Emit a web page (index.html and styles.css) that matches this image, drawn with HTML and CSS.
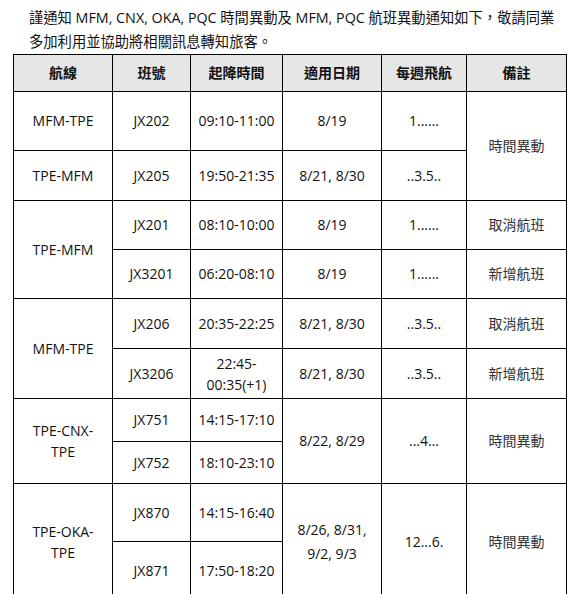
FILE: index.html
```html
<!DOCTYPE html>
<html lang="zh-Hant">
<head>
<meta charset="utf-8">
<link rel="stylesheet" href="styles.css">
</head>
<body>
<div class="page">
  <p class="notice">謹通知 MFM, CNX, OKA, PQC 時間異動及 MFM, PQC 航班異動通知如下，敬請同業多加利用並協助將相關訊息轉知旅客。</p>
  <table class="sched">
    <colgroup>
      <col class="c1"><col class="c2"><col class="c3"><col class="c4"><col class="c5"><col class="c6">
    </colgroup>
    <thead>
      <tr class="h-head">
        <th>航線</th><th>班號</th><th>起降時間</th><th>適用日期</th><th>每週飛航</th><th>備註</th>
      </tr>
    </thead>
    <tbody>
      <tr class="h59">
        <td>MFM-TPE</td><td>JX202</td><td>09:10-11:00</td><td>8/19</td><td>1......</td><td rowspan="2" class="cjk">時間異動</td>
      </tr>
      <tr class="h50">
        <td>TPE-MFM</td><td>JX205</td><td>19:50-21:35</td><td>8/21, 8/30</td><td>..3.5..</td>
      </tr>
      <tr class="h49">
        <td rowspan="2">TPE-MFM</td><td>JX201</td><td>08:10-10:00</td><td>8/19</td><td>1......</td><td class="cjk">取消航班</td>
      </tr>
      <tr class="h49">
        <td>JX3201</td><td>06:20-08:10</td><td>8/19</td><td>1......</td><td class="cjk">新增航班</td>
      </tr>
      <tr class="h50">
        <td rowspan="2">MFM-TPE</td><td>JX206</td><td>20:35-22:25</td><td>8/21, 8/30</td><td>..3.5..</td><td class="cjk">取消航班</td>
      </tr>
      <tr class="h50">
        <td>JX3206</td><td class="two">22:45-<br>00:35(+1)</td><td>8/21, 8/30</td><td>..3.5..</td><td class="cjk">新增航班</td>
      </tr>
      <tr class="h43">
        <td rowspan="2" class="two">TPE-CNX-<br>TPE</td><td>JX751</td><td>14:15-17:10</td><td rowspan="2">8/22, 8/29</td><td rowspan="2">...4...</td><td rowspan="2" class="cjk">時間異動</td>
      </tr>
      <tr class="h42">
        <td>JX752</td><td>18:10-23:10</td>
      </tr>
      <tr class="h58">
        <td rowspan="2" class="two">TPE-OKA-<br>TPE</td><td>JX870</td><td>14:15-16:40</td><td rowspan="2" class="tall">8/26, 8/31,<br>9/2, 9/3</td><td rowspan="2">12...6.</td><td rowspan="2" class="cjk">時間異動</td>
      </tr>
      <tr class="h58">
        <td>JX871</td><td>17:50-18:20</td>
      </tr>
    </tbody>
  </table>
</div>
</body>
</html>
```

FILE: styles.css
```css
html, body {
  margin: 0;
  padding: 0;
  background: #ffffff;
}

.page {
  padding: 6px 0 0 13px;
  font-family: "Open Sans", "Noto Sans CJK TC", sans-serif;
  color: #111;
}

.notice {
  margin: 0 0 0 16px;
  width: 535px;
  font-size: 14.3px;
  line-height: 24px;
}

.sched {
  border-collapse: collapse;
  table-layout: fixed;
  width: 553px;
  font-size: 14px;
}

.c1 { width: 99px; }
.c2 { width: 78px; }
.c3 { width: 92px; }
.c4 { width: 99px; }
.c5 { width: 85px; }
.c6 { width: 100px; }

.sched th,
.sched td {
  border: 1px solid #000;
  padding: 0 4px;
  text-align: center;
  vertical-align: middle;
  line-height: 20px;
  white-space: nowrap;
}

.sched th {
  background: #e6e6e6;
  font-weight: 700;
  font-size: 14px;
}

.sched td.two { line-height: 21px; }
.sched td.tall { line-height: 24px; }
.sched td.cjk { color: #333; }

.h-head { height: 37px; }
.h59 { height: 59px; }
.h50 { height: 50px; }
.h49 { height: 49px; }
.h43 { height: 43px; }
.h42 { height: 42px; }
.h58 { height: 58px; }
```
